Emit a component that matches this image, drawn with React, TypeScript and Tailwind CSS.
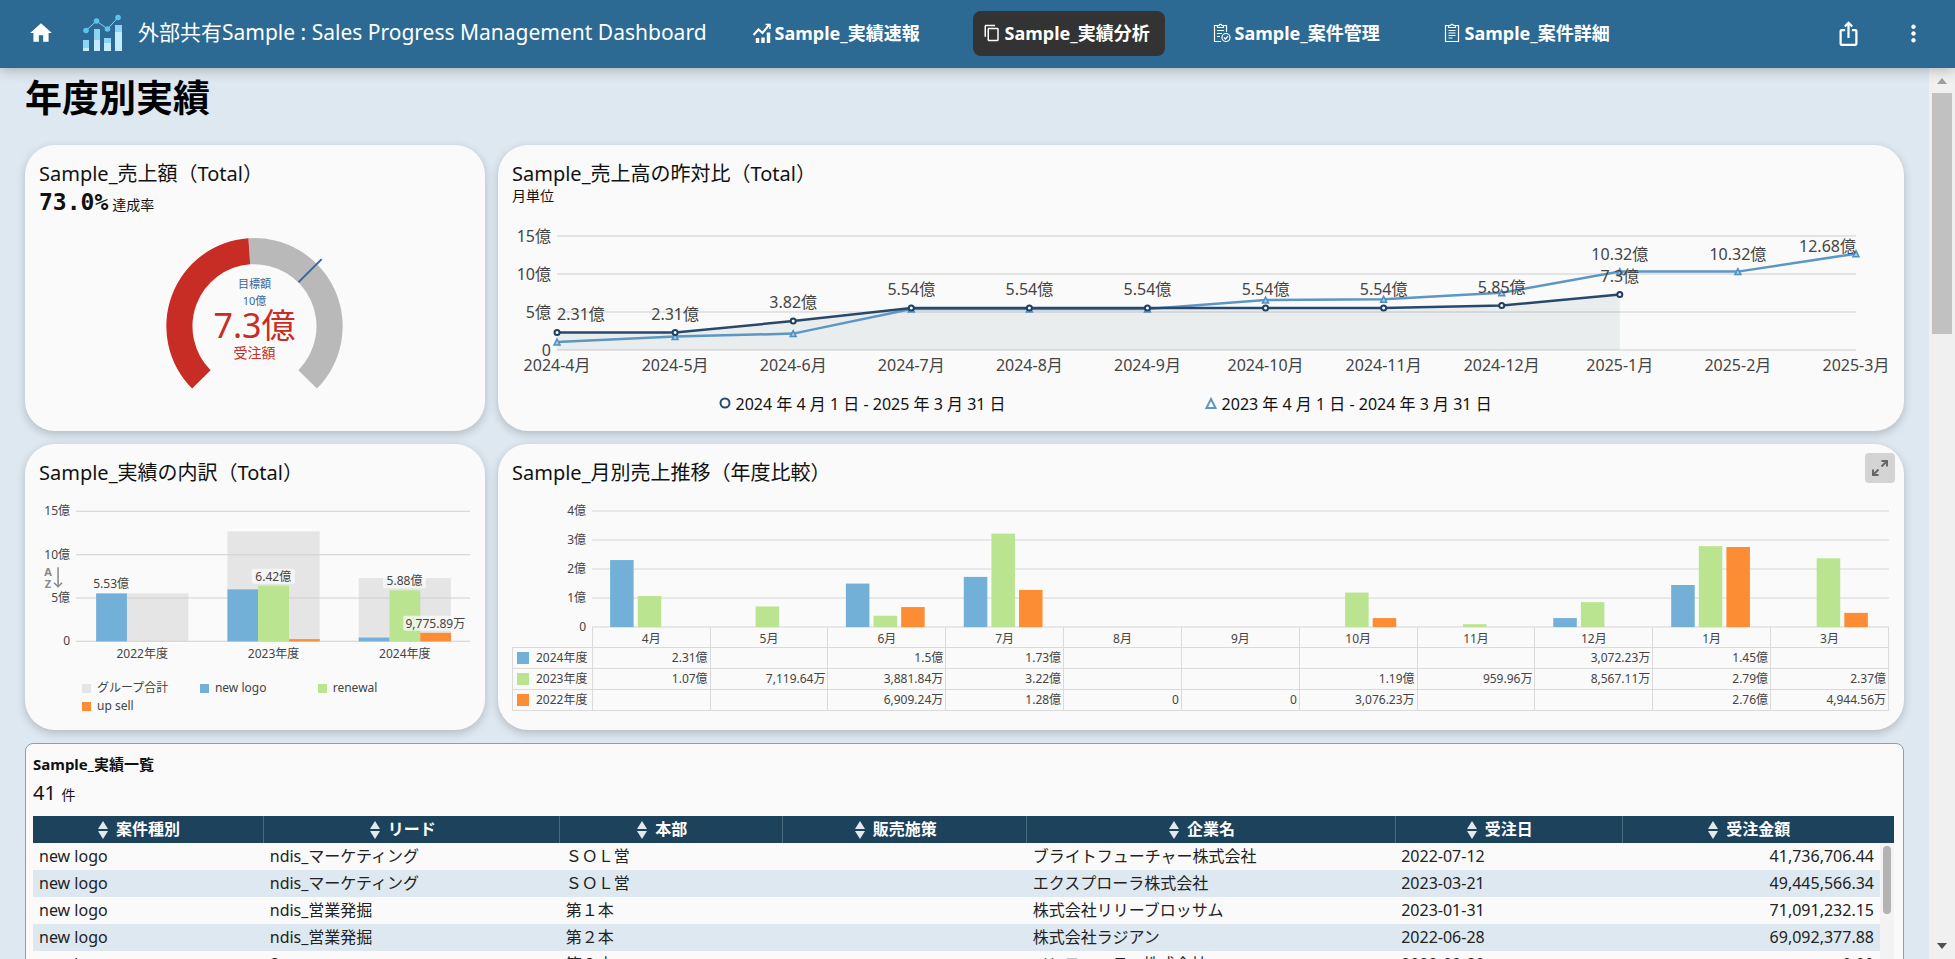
import type { ReactNode } from "react";
import { MdContentCopy, MdHome, MdIosShare, MdMoreVert } from "react-icons/md";

const BLUE = "#72b0d8";
const GREEN = "#bae48f";
const ORANGE = "#fc8d34";

const navItems = [
  { label: "Sample_実績速報", icon: <TrendIcon />, active: false },
  { label: "Sample_実績分析", icon: <MdContentCopy size={18} />, active: true },
  { label: "Sample_案件管理", icon: <ClipboardIcon checked />, active: false },
  { label: "Sample_案件詳細", icon: <ClipboardIcon />, active: false },
];

const months = ["2024-4月", "2024-5月", "2024-6月", "2024-7月", "2024-8月", "2024-9月", "2024-10月", "2024-11月", "2024-12月", "2025-1月", "2025-2月", "2025-3月"];
const thisYear = [2.31, 2.31, 3.82, 5.54, 5.54, 5.54, 5.54, 5.54, 5.85, 7.3];
const lastYear = [1.07, 1.78, 2.17, 5.39, 5.39, 5.39, 6.58, 6.68, 7.54, 10.32, 10.32, 12.68];

const yearly = [
  { year: "2022年度", total: 5.53, values: [5.53, 0, 0], labels: ["5.53億", "", ""] },
  { year: "2023年度", total: 12.68, values: [6.0, 6.42, 0.26], labels: ["", "6.42億", ""] },
  { year: "2024年度", total: 7.3, values: [0.44, 5.88, 0.98], labels: ["", "5.88億", "9,775.89万"] },
];

const monthly = [
  { month: "4月", values: [2.31, 1.07, 0] },
  { month: "5月", values: [0, 0.71, 0] },
  { month: "6月", values: [1.5, 0.39, 0.69] },
  { month: "7月", values: [1.73, 3.22, 1.28] },
  { month: "8月", values: [0, 0, 0] },
  { month: "9月", values: [0, 0, 0] },
  { month: "10月", values: [0, 1.19, 0.31] },
  { month: "11月", values: [0, 0.1, 0] },
  { month: "12月", values: [0.31, 0.86, 0] },
  { month: "1月", values: [1.45, 2.79, 2.76] },
  { month: "3月", values: [0, 2.37, 0.49] },
];

const monthlyRows = [
  { year: "2024年度", swatch: "bg-[#72b0d8]", cells: ["2.31億", "", "1.5億", "1.73億", "", "", "", "", "3,072.23万", "1.45億", ""] },
  { year: "2023年度", swatch: "bg-[#bae48f]", cells: ["1.07億", "7,119.64万", "3,881.84万", "3.22億", "", "", "1.19億", "959.96万", "8,567.11万", "2.79億", "2.37億"] },
  { year: "2022年度", swatch: "bg-[#fc8d34]", cells: ["", "", "6,909.24万", "1.28億", "0", "0", "3,076.23万", "", "", "2.76億", "4,944.56万"] },
];

const columns = ["案件種別", "リード", "本部", "販売施策", "企業名", "受注日", "受注金額"];
const deals = [
  ["new logo", "ndis_マーケティング", "ＳＯＬ営", "", "ブライトフューチャー株式会社", "2022-07-12", "41,736,706.44"],
  ["new logo", "ndis_マーケティング", "ＳＯＬ営", "", "エクスプローラ株式会社", "2023-03-21", "49,445,566.34"],
  ["new logo", "ndis_営業発掘", "第１本", "", "株式会社リリーブロッサム", "2023-01-31", "71,091,232.15"],
  ["new logo", "ndis_営業発掘", "第２本", "", "株式会社ラジアン", "2022-06-28", "69,092,377.88"],
  ["new logo", "Sansan", "第２本", "", "インフィニティ株式会社", "2022-09-30", "0.00"],
];

function TrendIcon() {
  return (
    <svg width="18" height="20" viewBox="0 0 18 20" fill="none" stroke="currentColor" strokeWidth="2">
      <path d="M0.500 12l5-5.500 4 3.500L16 2" />
      <path d="M12.500 1.500H17V6" strokeWidth="1.500" />
      <path d="M4.500 20v-5M10 20v-5.500M15.500 20V9.500" strokeWidth="3.400" />
    </svg>
  );
}

function ClipboardIcon({ checked = false }: { checked?: boolean }) {
  return (
    <svg width="18" height="20" viewBox="0 0 18 20" fill="none" stroke="currentColor" strokeWidth="1.2">
      <path d={checked ? "M8 18.500H1.500v-16H4M11 2.500h2.500V9" : "M5 2.500H2.500v16h13v-16H13"} />
      <path d={checked ? "M4.500 4.500v-2H6a1.600 1.600 0 0 1 3 0h1.500v2z" : "M5.500 4.500v-2H7.500a1.600 1.600 0 0 1 3 0h2v2z"} />
      <path d={checked ? "M4 7.500h7M4 10.500h5M4 13.500h3" : "M5.500 7.500h7M5.500 10h7M5.500 12.500h7M5.500 15h4"} />
      {checked && <circle cx="13" cy="14.500" r="4" />}
      {checked && <path d="M11 14.500l1.500 1.500 2.500-3" />}
    </svg>
  );
}

function Logo() {
  return (
    <svg width="40" height="38" viewBox="0 0 40 38" className="shrink-0">
      <g fill="#c5ecfb">
        <rect x="1" y="26" width="6" height="11" />
        <rect x="12" y="15" width="6" height="22" />
        <rect x="22" y="24" width="7" height="13" />
        <rect x="33" y="11" width="7" height="26" />
      </g>
      <g fill="#8ed4f5">
        <rect x="1" y="26" width="6" height="8" />
        <rect x="12" y="15" width="6" height="11" />
        <rect x="22" y="24" width="7" height="5" />
        <rect x="33" y="11" width="7" height="7" />
      </g>
      <path d="M4 16.500L14.500 7 25.500 15 36 3.500" fill="none" stroke="#8ed4f5" strokeWidth="1" />
      <g fill="#5cc3f0">
        <circle cx="4" cy="16.500" r="2.800" />
        <circle cx="14.500" cy="7" r="2.800" />
        <circle cx="25.500" cy="15" r="2.800" />
        <circle cx="36" cy="3.500" r="2.800" />
      </g>
    </svg>
  );
}

function Header() {
  return (
    <header className="relative z-10 flex h-[68px] shrink-0 items-center bg-[#2c6a94] pb-[2px] text-white shadow-[0_2px_12px_rgba(0,0,0,0.25)]">
      <a href="#home" aria-label="ホーム" className="ml-7">
        <MdHome size={26} />
      </a>
      <div className="ml-7">
        <Logo />
      </div>
      <span className="ml-4 text-[21px] whitespace-nowrap">外部共有Sample : Sales Progress Management Dashboard</span>
      <nav className="ml-9 flex gap-[38px]">
        {navItems.map(item => (
          <a
            key={item.label}
            href="#page"
            className={`flex h-[45px] w-48 items-center gap-1 rounded-lg pl-[10px] text-[18px] font-bold whitespace-nowrap ${item.active ? "bg-[#333333]" : ""}`}
          >
            <span className="shrink-0">{item.icon}</span>
            {item.label}
          </a>
        ))}
      </nav>
      <div className="mr-7 ml-auto flex items-center gap-[38px]">
        <button aria-label="共有">
          <MdIosShare size={27} />
        </button>
        <button aria-label="メニュー">
          <MdMoreVert size={27} />
        </button>
      </div>
    </header>
  );
}

function Card({ title, children }: { title: string; children: ReactNode }) {
  return (
    <section className="relative min-h-[286px] rounded-[30px] bg-[#fafafa] pt-[15px] pr-[15px] pl-[14px] shadow-[0_3px_10px_rgba(0,0,0,0.2)]">
      <h2 className="text-[20px] leading-7">{title}</h2>
      {children}
    </section>
  );
}

function GaugeCard() {
  return (
    <Card title="Sample_売上額（Total）">
      <p className="flex h-7 items-baseline gap-1 text-[14px] leading-7">
        <span className="font-['DejaVu_Sans_Mono',monospace] text-[23px] font-bold">73.0%</span>
        達成率
      </p>
      <svg viewBox="0 0 430 210" className="h-auto w-full" textAnchor="middle">
        <path d="M208.900 22.200A88 88 0 0 1 277.200 172.200L258.800 153.800A62 62 0 0 0 210.700 48.200Z" fill="#b9b9b9" />
        <path d="M152.800 172.200A88 88 0 0 1 208.900 22.200L210.700 48.200A62 62 0 0 0 171.200 153.800Z" fill="#c72c25" />
        <path d="M259 66L282 43" stroke="#35679a" strokeWidth="2" />
        <text x="215" y="72" fontSize="11" fill="#35679a">目標額</text>
        <text x="215" y="89" fontSize="11" fill="#35679a">10億</text>
        <text x="215" y="122" fontSize="34" fill="#c72c25">7.3億</text>
        <text x="215" y="142" fontSize="14" fill="#c72c25">受注額</text>
      </svg>
    </Card>
  );
}

function LineCard() {
  const x = (i: number) => 45 + i * 118;
  const y = (v: number) => 146 - v * 7.6;
  const line = (values: number[]) => values.map((v, i) => `${x(i)},${y(v)}`).join(" ");

  return (
    <Card title="Sample_売上高の昨対比（Total）">
      <p className="text-[14px] leading-4">月単位</p>
      <svg viewBox="0 0 1376 176" className="h-auto w-full overflow-visible" fontSize="16" fill="#444" textAnchor="middle">
        {[0, 5, 10, 15].map(v => (
          <g key={v}>
            <path d={`M45 ${y(v)}H1343`} stroke="#dcdcdc" strokeWidth="1.5" />
            <text x="39" y={y(v) + 6} textAnchor="end">{v ? `${v}億` : "0"}</text>
          </g>
        ))}
        <polygon points={`45,146 ${line(thisYear)} ${x(9)},146`} fill="#1c425c" fillOpacity="0.07" />
        <polyline points={line(lastYear)} fill="none" stroke="#5b96c4" strokeWidth="2.5" />
        {lastYear.map((v, i) => (
          <path key={i} d={`M${x(i)} ${y(v) - 3}l3 6h-6z`} fill="#a9c9e3" stroke="#4f90c3" strokeWidth="1.5" />
        ))}
        <polyline points={line(thisYear)} fill="none" stroke="#28496b" strokeWidth="2.5" />
        {thisYear.map((v, i) => (
          <circle key={i} cx={x(i)} cy={y(v)} r="2.500" fill="#fff" stroke="#1c3f63" strokeWidth="2" />
        ))}
        {thisYear.map((v, i) => (
          <text key={i} x={x(i)} y={y(v) - 13} textAnchor={i === 0 ? "start" : "middle"}>{v}億</text>
        ))}
        <text x={x(9)} y={y(10.32) - 12}>10.32億</text>
        <text x={x(10)} y={y(10.32) - 12}>10.32億</text>
        <text x={x(11)} y={y(12.68) - 2} textAnchor="end">12.68億</text>
        {months.map((m, i) => (
          <text key={m} x={x(i)} y="167">{m}</text>
        ))}
      </svg>
      <ul className="mt-3 flex gap-[17%] pl-[15%] text-[16px] leading-6 whitespace-nowrap">
        <li className="flex items-center gap-[5px]">
          <svg width="12" height="14" viewBox="0 0 12 14">
            <circle cx="6" cy="6" r="4.500" fill="#fff" stroke="#28496b" strokeWidth="2" />
          </svg>
          2024 年 4 月 1 日 - 2025 年 3 月 31 日
        </li>
        <li className="flex items-center gap-[5px]">
          <svg width="12" height="14" viewBox="0 0 12 14">
            <path d="M6 2l4.500 9h-9z" fill="#fff" stroke="#5b96c4" strokeWidth="2" />
          </svg>
          2023 年 4 月 1 日 - 2024 年 3 月 31 日
        </li>
      </ul>
    </Card>
  );
}

function YearlyCard() {
  const y = (v: number) => 154 - v * 8.65;
  const colors = [BLUE, GREEN, ORANGE];
  const legend = [
    { name: "グループ合計", swatch: "bg-[#e5e5e5]" },
    { name: "new logo", swatch: "bg-[#72b0d8]" },
    { name: "renewal", swatch: "bg-[#bae48f]" },
    { name: "up sell", swatch: "bg-[#fc8d34]" },
  ];

  return (
    <Card title="Sample_実績の内訳（Total）">
      <svg viewBox="0 0 430 186" className="h-auto w-full" fontSize="12" fill="#444" textAnchor="middle">
        {yearly.map((d, i) => (
          <rect key={d.year} x={57 + i * 131} y={y(d.total)} width="92" height={154 - y(d.total)} fill="#e5e5e5" />
        ))}
        {[0, 5, 10, 15].map(v => (
          <g key={v}>
            <path d={`M37 ${y(v)}H430`} stroke="#cfcfcf" />
            <text x="31" y={y(v) + 4} textAnchor="end">{v ? `${v}億` : "0"}</text>
          </g>
        ))}
        {yearly.map((d, i) => (
          <g key={d.year}>
            {d.values.map((v, n) => (
              <rect key={n} x={57 + i * 131 + n * 30.7} y={y(v)} width="30.700" height={154 - y(v)} fill={colors[n]} />
            ))}
            {d.labels.map((label, n) => {
              if (!label) return null;
              const cx = 72 + i * 131 + n * 30.7;
              const w = label.length > 6 ? 64 : 43;
              return (
                <g key={n}>
                  <rect x={cx - w / 2} y={y(d.values[n]) - 17} width={w} height="15" rx="2" fill="#fafafa" fillOpacity="0.75" />
                  <text x={cx} y={y(d.values[n]) - 5}>{label}</text>
                </g>
              );
            })}
            <text x={103 + i * 131} y="171">{d.year}</text>
          </g>
        ))}
        <g fill="#888" fontSize="11" fontWeight="bold">
          <text x="9" y="89">A</text>
          <text x="9" y="101">Z</text>
        </g>
        <path d="M19 80v19M15 95.500l4 4 4-4" fill="none" stroke="#888" strokeWidth="1.500" />
      </svg>
      <ul className="mt-[6px] grid grid-cols-3 pr-[8%] pl-[10%] text-[12px] leading-[18px] text-[#444]">
        {legend.map(item => (
          <li key={item.name} className="flex items-center gap-[6px] whitespace-nowrap">
            <span className={`size-[9px] ${item.swatch}`} />
            {item.name}
          </li>
        ))}
      </ul>
    </Card>
  );
}

function MonthlyCard() {
  const y = (v: number) => 140 - v * 29;
  const colors = [BLUE, GREEN, ORANGE];
  const step = 1296 / monthly.length;

  return (
    <Card title="Sample_月別売上推移（年度比較）">
      <button aria-label="拡大" className="absolute top-[9px] right-[9px] flex size-[30px] items-center justify-center rounded-sm bg-[#d4d4d4]">
        <svg width="18" height="18" viewBox="0 0 18 18" fill="none" stroke="#666" strokeWidth="2">
          <path d="M10.500 2H16v5.500M16 2l-5.500 5.500M7.500 16H2v-5.500M2 16l5.500-5.500" />
        </svg>
      </button>
      <svg viewBox="0 0 1376 140" className="block h-auto w-full overflow-visible" fontSize="12" fill="#444" textAnchor="end">
        {[0, 1, 2, 3, 4].map(v => (
          <g key={v}>
            <path d={`M80 ${y(v)}H1376`} stroke="#d6d6d6" />
            <text x="74" y={y(v) + 4}>{v ? `${v}億` : "0"}</text>
          </g>
        ))}
        {monthly.map((d, i) =>
          d.values.map((v, n) => (
            <rect key={`${i}-${n}`} x={80 + i * step + 18 + n * 27.6} y={y(v)} width="23.500" height={140 - y(v)} fill={colors[n]} />
          ))
        )}
      </svg>
      <table className="w-full table-fixed border-collapse text-[12px] leading-5 text-[#444]">
        <colgroup>
          <col className="w-[5.8%]" />
        </colgroup>
        <thead>
          <tr>
            <td />
            {monthly.map(d => (
              <th key={d.month} scope="col" className="h-5 border-x border-[#dadada] p-0 pt-1 leading-4 font-normal">{d.month}</th>
            ))}
          </tr>
        </thead>
        <tbody>
          {monthlyRows.map(row => (
            <tr key={row.year}>
              <th scope="row" className="border border-[#dadada] p-0 font-normal">
                <span className="flex items-center gap-[7px] pl-1">
                  <span className={`size-3 ${row.swatch}`} />
                  {row.year}
                </span>
              </th>
              {row.cells.map((cell, i) => (
                <td key={i} className="border border-[#dadada] p-0 pr-[2px] text-right">{cell}</td>
              ))}
            </tr>
          ))}
        </tbody>
      </table>
    </Card>
  );
}

function DealTable() {
  return (
    <section className="mt-[13px] rounded-lg border border-[#7ba3c4] bg-[#fafafa] pt-2 pr-[9px] pb-4 pl-[7px]">
      <h2 className="text-[15px] leading-6 font-bold">Sample_実績一覧</h2>
      <p className="pt-[3px] pb-[7px] text-[14px] leading-7">
        <span className="mr-[2px] text-[20px]">41</span> 件
      </p>
      <div className="relative">
        <table className="w-full table-fixed border-collapse text-[16px] whitespace-nowrap">
          <colgroup>
            <col className="w-[12.4%]" />
            <col className="w-[15.9%]" />
            <col className="w-[12%]" />
            <col className="w-[13.1%]" />
            <col className="w-[19.8%]" />
            <col className="w-[12.2%]" />
            <col />
          </colgroup>
          <thead className="bg-[#1c425c] text-white">
            <tr>
              {columns.map(name => (
                <th key={name} scope="col" className="h-[27px] border-r border-[#4a6a80] p-0 leading-[27px] last:border-r-0">
                  <button className="flex w-full items-center justify-center gap-2 pr-[18px] font-bold">
                    <svg width="10" height="20" viewBox="0 0 10 20" fill="#e3e9ee">
                      <path d="M5 1l5 8H0zM5 19l5-8H0z" />
                    </svg>
                    {name}
                  </button>
                </th>
              ))}
            </tr>
          </thead>
          <tbody className="text-[#222]">
            {deals.map((deal, i) => (
              <tr key={i} className="even:bg-[#dee8f0]">
                {deal.map((value, n) => (
                  <td key={n} className="h-[27px] p-0 pl-[6px] leading-[27px] last:pr-5 last:text-right">{value}</td>
                ))}
              </tr>
            ))}
          </tbody>
        </table>
        <div className="absolute top-[27px] right-0 bottom-0 w-[14px] bg-[#f3f3f3] px-[3px] pt-[3px]">
          <div className="h-[68px] rounded-full bg-[#b3b3b3]" />
        </div>
      </div>
    </section>
  );
}

function PageScrollbar() {
  return (
    <div className="flex w-[26px] shrink-0 flex-col items-center justify-between bg-[#f0f0f0]">
      <div className="flex w-full flex-col items-center px-[3px]">
        <svg width="10" height="25" viewBox="0 0 10 25" fill="#a0a0a0">
          <path d="M0 16l5-6 5 6z" />
        </svg>
        <div className="h-[241px] w-full bg-[#c1c1c1]" />
      </div>
      <svg width="10" height="20" viewBox="0 0 10 20" fill="#505050">
        <path d="M0 4h10l-5 6z" />
      </svg>
    </div>
  );
}

export default function App() {
  return (
    <div className="flex h-screen flex-col bg-[#dee8f0] font-['Noto_Sans','Noto_Sans_CJK_JP',sans-serif] text-[#111]">
      <Header />
      <div className="flex min-h-0 flex-1">
        <main className="min-w-0 flex-1 overflow-hidden pr-[25px] pl-[25px]">
          <h1 className="pt-1 pb-[21px] text-[37px] leading-[52px] font-bold text-black">年度別実績</h1>
          <div className="grid grid-cols-[460fr_1406fr] gap-[13px]">
            <GaugeCard />
            <LineCard />
            <YearlyCard />
            <MonthlyCard />
          </div>
          <DealTable />
        </main>
        <PageScrollbar />
      </div>
    </div>
  );
}
